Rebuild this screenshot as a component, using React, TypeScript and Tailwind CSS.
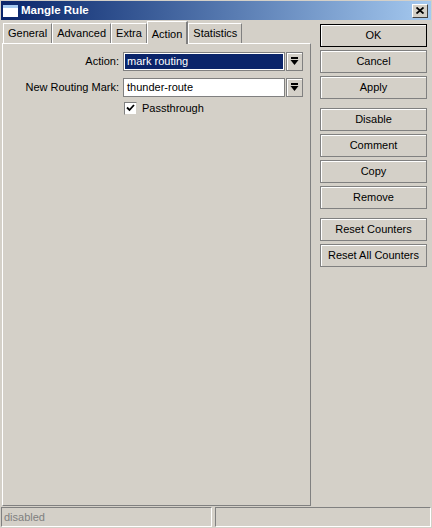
import React from 'react';

const font = { fontFamily: '"Liberation Sans", Arial, sans-serif' };

const Btn: React.FC<{ label: string; primary?: boolean; className?: string }> = ({ label, primary, className }) => (
  <div
    className={`h-[23px] w-[107px] flex items-center justify-center text-[11px] text-black bg-[#d4d0c8] border ${
      primary ? 'border-black' : 'border-[#808080]'
    } shadow-[inset_1px_1px_0_#ffffff] ${className ?? ''}`}
  >
    {label}
  </div>
);

const DropBtn = () => (
  <div className="w-[17px] h-[19px] bg-[#d4d0c8] border border-[#808080] shadow-[inset_1px_1px_0_#ffffff] flex items-center justify-center">
    <svg width="9" height="9" viewBox="0 0 9 9">
      <rect x="1" y="0" width="7" height="2" fill="#000" />
      <polygon points="0.5,3 8.5,3 4.5,8" fill="#000" />
    </svg>
  </div>
);

const Tab: React.FC<{ label: string; active?: boolean }> = ({ label, active }) =>
  active ? (
    <div className="h-[23px] px-[4px] flex items-start pt-[4px] text-[11px] bg-[#d4d0c8] border-t border-l border-white border-r-2 border-r-[#808080] -mb-px relative z-10">
      {label}
    </div>
  ) : (
    <div className="h-[20px] px-[4px] flex items-center text-[11px] text-black bg-[#d4d0c8] border-t border-l border-white border-r border-r-[#808080]">
      {label}
    </div>
  );

export default function App() {
  return (
    <div className="w-[432px] h-[528px] bg-[#d4d0c8] flex flex-col text-black overflow-hidden" style={font}>
      {/* title bar */}
      <div className="h-[19px] mx-[1px] mt-[1px] flex items-center bg-gradient-to-r from-[#0a246a] to-[#a6caf0] pl-[2px] pr-[3px]">
        <div className="w-[15px] h-[12px] bg-white border-t-[3px] border-[#a6caf0]" />
        <span className="ml-[3px] text-white font-bold text-[11.5px] leading-none">Mangle Rule</span>
        <div className="ml-auto w-[16px] h-[14px] bg-[#d4d0c8] border border-b-[#404040] border-r-[#404040] border-t-white border-l-white flex items-center justify-center">
          <svg width="8" height="7" viewBox="0 0 8 7">
            <path d="M0.5 0.5 L7.5 6.5 M7.5 0.5 L0.5 6.5" stroke="#000" strokeWidth="1.8" />
          </svg>
        </div>
      </div>

      {/* body */}
      <div className="flex flex-1 min-h-0">
        {/* left: tabs + panel */}
        <div className="flex flex-col w-[311px] pl-[2px] pb-[1px]">
          <div className="flex items-end h-[23px] pl-[1px]">
            <Tab label="General" />
            <Tab label="Advanced" />
            <Tab label="Extra" />
            <Tab label="Action" active />
            <Tab label="Statistics" />
          </div>
          <div className="flex-1 border-t border-l border-white border-r border-b border-r-[#808080] border-b-[#808080] pt-[8px]">
            <div className="flex items-center h-[19px]">
              <span className="w-[116px] text-right text-[11px]">Action:</span>
              <div className="ml-[4px] w-[162px] h-[19px] border border-[#808080] bg-white p-[1px]">
                <div className="h-full bg-[#0a246a] text-white text-[11px] flex items-center pl-[2px]">mark routing</div>
              </div>
              <div className="ml-[1px]">
                <DropBtn />
              </div>
            </div>
            <div className="flex items-center h-[19px] mt-[7px]">
              <span className="w-[116px] text-right text-[11px]">New Routing Mark:</span>
              <div className="ml-[4px] w-[162px] h-[19px] border border-[#808080] bg-white text-[11px] flex items-center pl-[3px]">
                thunder-route
              </div>
              <div className="ml-[1px]">
                <DropBtn />
              </div>
            </div>
            <div className="flex items-center mt-[3px] pl-[121px]">
              <div className="w-[13px] h-[13px] bg-white border border-t-[#808080] border-l-[#808080] border-b-[#d4d0c8] border-r-[#d4d0c8] flex items-center justify-center">
                <svg width="9" height="8" viewBox="0 0 9 8">
                  <path d="M1 3.5 L3.5 6 L8 1" stroke="#000" strokeWidth="1.8" fill="none" />
                </svg>
              </div>
              <span className="ml-[5px] text-[11px]">Passthrough</span>
            </div>
          </div>
        </div>

        {/* right: buttons */}
        <div className="flex flex-col pl-[9px] pt-[4px]">
          <div className="flex flex-col gap-[3px]">
            <Btn label="OK" primary />
            <Btn label="Cancel" />
            <Btn label="Apply" />
          </div>
          <div className="flex flex-col gap-[3px] mt-[9px]">
            <Btn label="Disable" />
            <Btn label="Comment" />
            <Btn label="Copy" />
            <Btn label="Remove" />
          </div>
          <div className="flex flex-col gap-[3px] mt-[9px]">
            <Btn label="Reset Counters" />
            <Btn label="Reset All Counters" />
          </div>
        </div>
      </div>

      {/* status bar */}
      <div className="h-[21px] flex gap-[3px] px-[1px] pb-[1px]">
        <div className="w-[211px] h-full border border-t-[#808080] border-l-[#808080] border-b-white border-r-white text-[11px] text-[#808080] flex items-center pl-[2px]">
          disabled
        </div>
        <div className="flex-1 h-full border border-t-[#808080] border-l-[#808080] border-b-white border-r-white" />
      </div>
    </div>
  );
}
